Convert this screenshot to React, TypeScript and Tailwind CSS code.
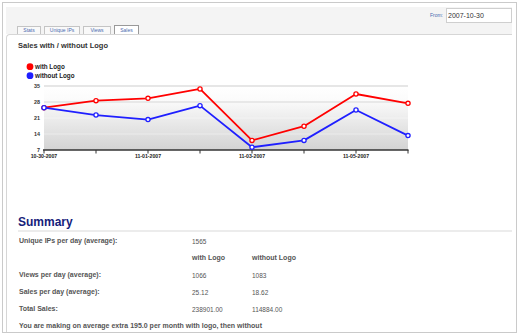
const DATES = ['10-30-2007', '10-31-2007', '11-01-2007', '11-02-2007', '11-03-2007', '11-04-2007', '11-05-2007', '11-06-2007'];
const WITH_LOGO = [25.5, 28.6, 29.6, 33.7, 11.2, 17.4, 31.5, 27.4];
const WITHOUT_LOGO = [25.5, 22.3, 20.3, 26.4, 8.2, 11.2, 24.5, 13.3];
const TICKS = [35, 28, 21, 14, 7];

const X0 = 44;
const STEP = 52;
const xOf = (i: number) => X0 + i * STEP;
const yOf = (v: number) => 150 - ((v - 7) * 64) / 28;

function Series({ values, color }: { values: number[]; color: string }) {
  const pts = values.map((v, i) => `${xOf(i)},${yOf(v)}`).join(' ');
  return (
    <g>
      <polyline points={pts} fill="none" stroke={color} strokeWidth={1.8} strokeLinejoin="round" />
      {values.map((v, i) => (
        <circle key={i} cx={xOf(i)} cy={yOf(v)} r={2.1} fill="#fff" stroke={color} strokeWidth={1.3} />
      ))}
    </g>
  );
}

function SalesChart() {
  const right = xOf(DATES.length - 1);
  return (
    <svg width={420} height={104} viewBox="18 58 420 104" className="block">
      <defs>
        <linearGradient id="plotBg" x1="0" y1="0" x2="0" y2="1">
          <stop offset="0%" stopColor="#ffffff" />
          <stop offset="22%" stopColor="#fbfbfb" />
          <stop offset="100%" stopColor="#d3d3d3" />
        </linearGradient>
      </defs>

      {/* legend */}
      <circle cx={30} cy={66.7} r={3.4} fill="#ff0000" />
      <text x={35} y={69} fontSize={6.3} fontWeight={700} fill="#222">with Logo</text>
      <circle cx={30} cy={75.7} r={3.4} fill="#1f1fff" />
      <text x={35} y={78} fontSize={6.3} fontWeight={700} fill="#222">without Logo</text>

      {/* plot background + grid */}
      <rect x={X0} y={86} width={right - X0} height={64} fill="url(#plotBg)" />
      <line x1={X0} x2={right} y1={86} y2={86} stroke="#e6e6e6" strokeWidth={2} />
      <line x1={X0} x2={right} y1={102} y2={102} stroke="#e2e2e2" strokeWidth={1.5} />
      <line x1={X0} x2={right} y1={118} y2={118} stroke="#f3f3f3" strokeWidth={1} />
      <line x1={X0} x2={right} y1={134} y2={134} stroke="#ececec" strokeWidth={1} />

      {TICKS.map((t) => (
        <text key={t} x={40} y={yOf(t) + 2} fontSize={5.4} fontWeight={700} fill="#333" textAnchor="end">
          {t}
        </text>
      ))}

      {/* x axis */}
      <line x1={X0 - 1} x2={right + 0.5} y1={150} y2={150} stroke="#333" strokeWidth={1.6} />
      {DATES.map((d, i) => (
        <g key={d}>
          <line x1={xOf(i)} x2={xOf(i)} y1={150} y2={153.5} stroke="#333" strokeWidth={1} />
          {i % 2 === 0 && (
            <text x={xOf(i)} y={158} fontSize={5.2} fontWeight={700} fill="#222" textAnchor="middle">
              {d}
            </text>
          )}
        </g>
      ))}

      <Series values={WITH_LOGO} color="#ff0000" />
      <Series values={WITHOUT_LOGO} color="#1f1fff" />
    </svg>
  );
}

const TABS = [
  { label: 'Stats', w: 'w-[24px]' },
  { label: 'Unique IPs', w: 'w-[36px]' },
  { label: 'Views', w: 'w-[28px]' },
  { label: 'Sales', w: 'w-[25px]', active: true },
];

const ROWS = [
  { label: 'Views per day (average):', a: '1066', b: '1083' },
  { label: 'Sales per day (average):', a: '25.12', b: '18.62' },
  { label: 'Total Sales:', a: '238901.00', b: '114884.00' },
];

export default function App() {
  return (
    <div className="bg-white w-[519px] h-[335px] pt-[2px] pl-[2px] font-['Liberation_Sans',Arial,sans-serif]">
      <div className="w-[515px] h-[331px] border border-[#cacaca] pt-[4px] pl-[3px] pr-[4px] overflow-hidden">
        {/* Toolbar */}
        <div className="h-[27px] bg-[#f4f4f4] flex justify-between pl-[11px]">
          <div className="flex items-end gap-[3px]">
            {TABS.map((t) => (
              <div
                key={t.label}
                className={`${t.w} h-[8px] flex items-center justify-center text-[5px] leading-none text-[#4a6bb0] border border-b-0 ${
                  t.active ? 'bg-white border-[#999] h-[9px]' : 'bg-[#f9f9f9] border-[#c4c4c4]'
                }`}
              >
                {t.label}
              </div>
            ))}
          </div>
          <div className="flex items-start pt-[1px] gap-[3px]">
            <span className="text-[5px] leading-[15px] text-[#4a6bb0]">From:</span>
            <div className="w-[66px] h-[15px] bg-white border border-[#cfcfcf] pl-[1px] text-[7px] leading-[13px] text-[#333]">
              2007-10-30
            </div>
          </div>
        </div>

        {/* Content */}
        <div className="border-t border-l border-[#d6d6d6] rounded-tl-[4px] pl-[11px] pt-[6px]">
          <h2 className="text-[7.5px] leading-[10px] font-bold text-[#333]">Sales with / without Logo</h2>
          <div className="mt-[7px]">
            <SalesChart />
          </div>

          <h1 className="mt-[53px] text-[12px] leading-[14px] font-bold text-[#15217a] border-b-2 border-[#ececec] pb-[1px]">
            Summary
          </h1>

          <div className="mt-[1px] pl-[1px] grid grid-cols-[173px_60px_1fr] auto-rows-[17px] items-center text-[7px] text-[#555]">
            <div className="font-bold">Unique IPs per day (average):</div>
            <div className="text-[6.5px]">1565</div>
            <div />

            <div />
            <div className="font-bold">with Logo</div>
            <div className="font-bold">without Logo</div>

            {ROWS.map((r) => (
              <div key={r.label} className="contents">
                <div className="font-bold">{r.label}</div>
                <div className="text-[6.5px]">{r.a}</div>
                <div className="text-[6.5px]">{r.b}</div>
              </div>
            ))}

            <div className="col-span-3 font-bold">
              You are making on average extra 195.0 per month with logo, then without
            </div>
          </div>
        </div>
      </div>
    </div>
  );
}
